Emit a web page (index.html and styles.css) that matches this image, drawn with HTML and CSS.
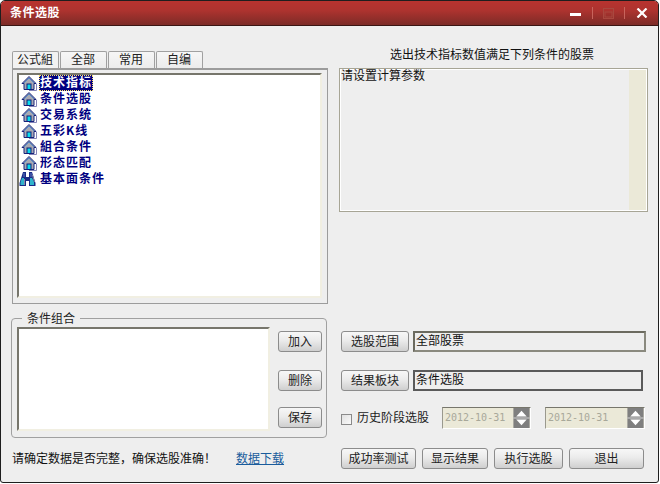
FILE: index.html
```html
<!DOCTYPE html>
<html lang="zh">
<head>
<meta charset="utf-8">
<title>条件选股</title>
<link rel="stylesheet" href="styles.css">
</head>
<body>
<svg class="defs" width="0" height="0">
  <defs>
    <symbol id="house" viewBox="0 0 16 16">
      <path d="M8 15.5 H15.5 V9" stroke="#8484b8" fill="none"/>
      <path d="M8 1.5 L15 8.5 H13 V14.5 H3 V8.5 H1 Z" fill="#a9a9b2" stroke="#16237c" stroke-width="1"/>
      <path d="M8 3 L3 8 M8 3 L13 8" stroke="#4f86c8" stroke-width="1" fill="none"/>
      <rect x="6" y="9" width="4" height="5.5" fill="#08dcee" stroke="#10207a" stroke-width="1"/>
    </symbol>
    <symbol id="binoc" viewBox="0 0 17 16">
      <path d="M4 1 H7 V6 H10 V1 H13 L16.5 12 V15 H10 V10 H7 V15 H.5 V12 Z" fill="#1a2b86"/>
      <path d="M3 7 H5 V14 H1.5 V11 Z M11 7 H13 L15 11 V14 H11 Z" fill="#2fb4cc"/>
      <path d="M5.5 8 V14 M13.5 4 L15.5 11" stroke="#8a8aa8"/>
      <path d="M5 2 V6 M12 2 V6" stroke="#5e78c4"/>
    </symbol>
    <symbol id="spin" viewBox="0 0 17 21">
      <rect width="17" height="21" fill="#7f7f7f"/>
      <rect y="10" width="17" height="1" fill="#d8d8d8"/>
      <path d="M8.5 3 L14 9 H3 Z" fill="#fff"/>
      <path d="M8.5 18 L3 12 H14 Z" fill="#fff"/>
    </symbol>
  </defs>
</svg>
<div class="window">
  <header class="titlebar">
    <span class="title">条件选股</span>
    <div class="controls">
      <svg class="ctl ctl-min" width="11" height="3"><rect width="11" height="3" fill="#fff"/></svg>
      <span class="sep"></span>
      <svg class="ctl ctl-max" width="11" height="11"><rect x=".5" y=".5" width="10" height="10" fill="none" stroke="#a9483f"/><rect x="2" y="4" width="7" height="5" fill="none" stroke="#a9483f"/></svg>
      <span class="sep"></span>
      <svg class="ctl ctl-close" width="12" height="10"><path d="M1.5 .5 L10.5 9.5 M10.5 .5 L1.5 9.5" stroke="#fff" stroke-width="2.2"/></svg>
    </div>
  </header>
  <main class="content">
    <section class="left">
      <nav class="tabs">
        <span class="tab tab-on">公式組</span>
        <span class="tab">全部</span>
        <span class="tab">常用</span>
        <span class="tab">自编</span>
      </nav>
      <div class="tree-panel">
        <ul class="tree sunken">
          <li class="node"><svg class="ico"><use href="#house"/></svg><span class="label selected">技术指标</span></li>
          <li class="node"><svg class="ico"><use href="#house"/></svg><span class="label">条件选股</span></li>
          <li class="node"><svg class="ico"><use href="#house"/></svg><span class="label">交易系统</span></li>
          <li class="node"><svg class="ico"><use href="#house"/></svg><span class="label">五彩K线</span></li>
          <li class="node"><svg class="ico"><use href="#house"/></svg><span class="label">組合条件</span></li>
          <li class="node"><svg class="ico"><use href="#house"/></svg><span class="label">形态匹配</span></li>
          <li class="node"><svg class="ico ico-b"><use href="#binoc"/></svg><span class="label">基本面条件</span></li>
        </ul>
      </div>
      <fieldset class="group">
        <legend class="legend">条件组合</legend>
        <div class="combo sunken"></div>
        <div class="combo-btns">
          <button class="btn btn-s">加入</button>
          <button class="btn btn-s">删除</button>
          <button class="btn btn-s">保存</button>
        </div>
      </fieldset>
      <p class="note"><span>请确定数据是否完整，确保选股准确！</span><a class="link" href="#">数据下载</a></p>
    </section>
    <section class="right">
      <h2 class="heading">选出技术指标数值满足下列条件的股票</h2>
      <div class="info"><span>请设置计算参数</span><i class="track"></i></div>
      <div class="form-row row-a">
        <button class="btn btn-m">选股范围</button>
        <div class="field">全部股票</div>
      </div>
      <div class="form-row row-b">
        <button class="btn btn-m">结果板块</button>
        <div class="field field-short">条件选股</div>
      </div>
      <div class="form-row row-c">
        <span class="check"></span>
        <span class="check-label">历史阶段选股</span>
        <div class="date"><span>2012-10-31</span><svg class="spin"><use href="#spin"/></svg></div>
        <div class="date date-2"><span>2012-10-31</span><svg class="spin"><use href="#spin"/></svg></div>
      </div>
      <div class="actions">
        <button class="btn btn-a1">成功率测试</button>
        <button class="btn btn-a2">显示结果</button>
        <button class="btn btn-a3">执行选股</button>
        <button class="btn btn-a4">退出</button>
      </div>
    </section>
  </main>
</div>
</body>
</html>
```
FILE: styles.css
```css
* { box-sizing: border-box; }
html, body { margin: 0; padding: 0; background: #fff; }
body {
  width: 660px; height: 484px; overflow: hidden;
  font: 12px/14px "Noto Sans CJK SC", "Liberation Sans", sans-serif;
  color: #111;
}
.defs { position: absolute; }
.window {
  width: 659px; height: 483px;
  background: #eeeeee;
  border: 1px solid #1e1e1e;
  border-radius: 5px 5px 3px 3px;
  overflow: hidden;
  display: flex; flex-direction: column;
}
.titlebar {
  height: 25px; flex: none;
  background: linear-gradient(#b8332f 0, #ad332f 40%, #7c2b27 100%);
  border-bottom: 1px solid #3a1513;
  display: flex; align-items: center; justify-content: space-between;
  padding: 0 10px 0 9px;
  color: #fff;
}
.title { font-weight: 700; letter-spacing: .5px; padding-bottom: 2px; }
.controls { display: flex; align-items: center; }
.ctl { display: block; }
.sep { width: 1px; height: 12px; background: #c8645c; }
.ctl-min { margin: 3px 11px 0 0; }
.ctl-max { margin: 0 10px; }
.ctl-close { margin-left: 11px; }

.content { flex: 1; display: flex; padding-left: 10px; }
.left { width: 317px; padding-top: 25px; flex: none; }
.right { width: 309px; margin-left: 11px; padding-top: 22px; flex: none; }

.tabs { display: flex; gap: 1px; padding-left: 1px; height: 17px; }
.tab {
  width: 47px; height: 17px;
  border: 1px solid #a0a0a0; border-bottom: 0;
  border-radius: 2px 2px 0 0;
  background: linear-gradient(#f6f6f6, #ececec);
  text-align: center; line-height: 14px; padding-right: 1px;
  color: #222;
}
.tab-on { background: #f2f2f2; }

.tree-panel {
  margin-left: 1px; width: 316px; height: 236px;
  border: 1px solid #9c9c9c; border-width: 2px 1px 1px 1px;
  padding: 3px 5px 5px 4px;
}
.sunken {
  background: #fff;
  border-style: solid; border-width: 2px;
  border-color: #77766c #f1efe2 #f1efe2 #77766c;
}
.tree { list-style: none; margin: 0; padding: 0 0 0 2px; height: 100%; }
.node { height: 16px; display: flex; align-items: center; }
.ico { width: 16px; height: 16px; flex: none; }
.ico-b { width: 17px; margin-left: -2px; margin-right: 1px; }
.label {
  margin-left: 2px; height: 16px; padding: 0 1px;
  font-weight: 700; color: #000080; line-height: 14px;
  letter-spacing: 1px; white-space: nowrap;
}
.selected {
  background: #000080; color: #fff;
  outline: 1px dotted #ffe36a; outline-offset: -1px;
}

.group {
  margin: 14px 0 0; padding: 0; width: 316px; height: 120px;
  border: 1px solid #a0a0a0; border-radius: 4px;
  display: flex; position: relative;
}
.legend {
  position: absolute; left: 10px; top: -8px;
  padding: 0 5px; background: #eeeeee; line-height: 14px; color: #222;
}
.combo { width: 253px; height: 104px; margin: 8px 0 0 5px; }
.combo-btns {
  width: 44px; margin: 12px 0 0 8px;
  display: flex; flex-direction: column; gap: 18px;
}
.combo-btns .btn:last-child { margin-top: -2px; }

.btn {
  height: 21px; padding: 0 0 2px;
  font: inherit; color: #222;
  border: 1px solid #8c8c8c; border-radius: 3px;
  background: linear-gradient(#f7f7f7, #ebebeb 45%, #cfcfcf);
  flex: none;
}
.btn-s { width: 44px; }
.btn-m { width: 68px; }

.note {
  margin: 13px 0 0 1px; display: flex; line-height: 14px; white-space: nowrap;
}
.link { margin-left: 20px; color: #1a5c9c; text-decoration: underline; }

.heading {
  margin: 0; height: 20px; padding: 0 3px 0 0;
  font: inherit; color: #111; text-align: center;
  line-height: 12px;
}
.info {
  height: 144px; position: relative;
  border: 1px solid #a7a595;
  box-shadow: 0 0 0 1px #fff inset;
  padding: 0 0 0 1px; background: #eeeeee; line-height: 12px;
  display: block;
}
.track {
  position: absolute; right: 1px; top: 1px; bottom: 1px; width: 17px;
  background: #ebe9d8;
}

.form-row { display: flex; align-items: center; padding-left: 2px; }
.row-a { margin-top: 119px; }
.row-b { margin-top: 18px; }
.row-c { margin-top: 16px; height: 22px; }
.field {
  width: 233px; height: 21px; margin-left: 4px;
  border: 2px solid #6b6a5f;
  border-right-color: #8a897e; border-bottom-color: #8a897e;
  padding: 0 0 0 1px; line-height: 14px;
  background: #eeeeee;
}
.field-short { width: 230px; border-color: #5a5a5a; }
.check {
  width: 11px; height: 11px; margin-top: 2px;
  border: 1px solid #8a8a8a; background: linear-gradient(135deg, #e0e0e0, #fafafa);
  flex: none;
}
.check-label { margin-left: 5px; width: 71px; line-height: 12px; padding-bottom: 2px; white-space: nowrap; flex: none; color: #222; }
.date {
  width: 89px; height: 22px; margin-left: 14px;
  background: #ebe9d8;
  border: 1px solid; border-color: #77766c #fff #fff #9a998e;
  display: flex; align-items: center; justify-content: space-between;
  font: 10px/14px "DejaVu Sans Mono", monospace; color: #a8a89a;
  padding-left: 2px;
}
.date-2 { width: 100px; }
.spin { width: 17px; height: 20px; flex: none; }

.actions { display: flex; gap: 6px; margin-top: 19px; padding-left: 2px; }
.btn-a1 { width: 75px; }
.btn-a2 { width: 66px; }
.btn-a3 { width: 69px; }
.btn-a4 { width: 75px; }
```
